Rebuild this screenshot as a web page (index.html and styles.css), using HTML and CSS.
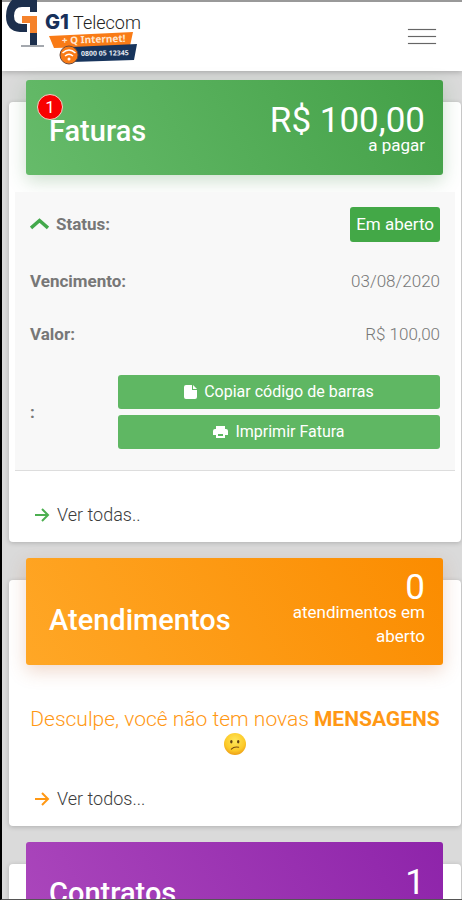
FILE: index.html
```html
<!DOCTYPE html>
<html lang="pt-BR">
<head>
<meta charset="utf-8">
<meta name="viewport" content="width=device-width, initial-scale=1">
<title>G1 Telecom</title>
<link rel="stylesheet" href="styles.css">
</head>
<body>
<div class="app">
  <header class="topbar">
    <a class="brand" href="#" aria-label="G1 Telecom">
      <svg class="logo" width="144" height="68" viewBox="0 0 144 68">
        <path d="M37 0V12H30V7H22Q14 7 14 16Q14 24 22 24H27V32H20Q6 31 6 16Q6 6 12 0Z" fill="#1c2f4d"/>
        <path d="M22 16H37V33H30V23H22Z" fill="#f5822b"/>
        <path d="M30 33H37V46H30Z" fill="#1c2f4d"/>
        <path d="M21 46H44" stroke="#a4a8ae" stroke-width="2"/>
        <text class="logo-g1" x="45" y="29">G1</text>
        <text class="logo-name" x="73" y="29">Telecom</text>
        <path d="M49 36L133 32L130 46L54 48Z" fill="#f97b16"/>
        <text class="logo-tag" x="62" y="44" transform="rotate(-2 62 44)">+ Q Internet!</text>
        <path d="M72 47L137 44L134 60L72 62Z" fill="#17345c"/>
        <text class="logo-phone" x="81" y="56" transform="rotate(-1 81 56)">0800 05 12345</text>
        <circle cx="69" cy="55" r="9" fill="#f97b16" stroke="#6b4a3c" stroke-width="1"/>
        <path d="M62.500 53Q69 47 75.500 53M65 56Q69 52.500 73 56" fill="none" stroke="#fff" stroke-width="1.500"/>
        <circle cx="69" cy="59" r="1.500" fill="#fff"/>
      </svg>
    </a>
    <button class="menu" type="button" aria-label="Menu"><span></span><span></span><span></span></button>
  </header>

  <main class="cards">
    <section class="card">
      <div class="card-head green">
        <h2><span class="count">1</span>Faturas</h2>
        <p class="summary"><strong>R$ 100,00</strong><span>a pagar</span></p>
      </div>
      <dl class="invoice">
        <div class="row tall">
          <dt><svg class="chevron" width="19" height="13" viewBox="0 0 19 13"><path d="M1 11L9.500 3.500L18 11" fill="none" stroke="#43a84b" stroke-width="3.500"/></svg>Status:</dt>
          <dd><span class="status">Em aberto</span></dd>
        </div>
        <div class="row"><dt>Vencimento:</dt><dd>03/08/2020</dd></div>
        <div class="row"><dt>Valor:</dt><dd>R$ 100,00</dd></div>
        <div class="row actions">
          <dt>:</dt>
          <dd>
            <button class="btn" type="button"><svg width="13" height="16" viewBox="0 0 13 16"><path d="M2 1H8V6H13V13Q13 15 11 15H2Q0 15 0 13V3Q0 1 2 1ZM9 1L13 5H9Z" fill="#fff"/></svg>Copiar código de barras</button>
            <button class="btn" type="button"><svg width="15" height="14" viewBox="0 0 15 14"><path d="M3 1H12V4H3ZM2 4H13Q15 4 15 6V10H12V13H3V10H0V6Q0 4 2 4Z" fill="#fff"/><path d="M5 9H10V11H5Z" fill="#5cb860"/></svg>Imprimir Fatura</button>
          </dd>
        </div>
      </dl>
      <a class="more" href="#"><svg width="15" height="14" viewBox="0 0 15 14"><path d="M0 7H13M7 1L13 7L7 13" fill="none" stroke="#4caf50" stroke-width="2"/></svg>Ver todas..</a>
    </section>

    <section class="card">
      <div class="card-head orange">
        <h2>Atendimentos</h2>
        <p class="summary"><strong>0</strong><span>atendimentos em aberto</span></p>
      </div>
      <p class="message">Desculpe, você não tem novas <b>MENSAGENS</b>
        <svg class="face" width="22" height="22" viewBox="0 0 24 24" role="img" aria-label="Rosto confuso">
          <defs><radialGradient id="skin" cx=".5" cy=".35" r=".65"><stop offset="0" stop-color="#ffe75a"/><stop offset=".7" stop-color="#fcc928"/><stop offset="1" stop-color="#ed9f17"/></radialGradient></defs>
          <circle cx="12" cy="12" r="12" fill="url(#skin)"/>
          <ellipse cx="8" cy="9.500" rx="1.300" ry="2" fill="#634214"/>
          <ellipse cx="15.500" cy="9.500" rx="1.300" ry="2" fill="#634214"/>
          <path d="M8 17.500Q11 14.500 16 15.500" fill="none" stroke="#7a4c12" stroke-width="1.200" stroke-linecap="round"/>
        </svg>
      </p>
      <a class="more" href="#"><svg width="15" height="14" viewBox="0 0 15 14"><path d="M0 7H13M7 1L13 7L7 13" fill="none" stroke="#ff9814" stroke-width="2"/></svg>Ver todos...</a>
    </section>

    <section class="card">
      <div class="card-head purple">
        <h2>Contratos</h2>
        <p class="summary single"><strong>1</strong></p>
      </div>
    </section>
  </main>
</div>
</body>
</html>
```

FILE: styles.css
```css
* { box-sizing: border-box; }

body {
  margin: 0;
  background: #dadada;
  color: #777;
  font: 400 17px/24px Roboto, sans-serif;
}

.app {
  height: 100vh;
  overflow: hidden;
  border-left: 2px solid #000;
  border-bottom: 1px solid #555;
}

h2, p, dl, dd { margin: 0; }

.topbar {
  display: flex;
  justify-content: space-between;
  align-items: center;
  height: 71px;
  padding-right: 26px;
  background: #fff;
  border-top: 2px solid #999;
  box-shadow: 0 1px 6px rgba(0, 0, 0, .25);
}

.brand { align-self: flex-start; margin-top: -2px; margin-left: -2px; }
.logo { display: block; }
.logo-g1 { font: 800 20px Inter, sans-serif; fill: #17305a; }
.logo-name { font: 300 18px Roboto, sans-serif; fill: #222; }
.logo-tag { font: 700 10px "Noto Sans", sans-serif; fill: #ffe6cf; }
.logo-phone { font: 700 7px "Noto Sans", sans-serif; fill: #e3e8ef; }

.menu {
  display: grid;
  gap: 6px;
  width: 28px;
  padding: 0;
  border: 0;
  background: none;
}
.menu span { height: 1px; background: #666; box-shadow: 0 0 1px #777; }

.cards {
  display: grid;
  gap: 38px;
  padding: 31px 1px 0 7px;
}

.card {
  background: #fff;
  border-radius: 4px;
  box-shadow: 0 1px 5px rgba(0, 0, 0, .2);
}

.card-head {
  display: flex;
  justify-content: space-between;
  align-items: center;
  min-height: 95px;
  margin: -22px 18px 0 17px;
  padding: 15px 18px 4px 23px;
  border-radius: 3px;
  color: #fff;
}
.green {
  background: linear-gradient(60deg, #66bb6a, #43a047);
  box-shadow: 0 6px 18px rgba(60, 130, 65, .25);
}
.orange {
  min-height: 107px;
  padding-top: 4px;
  background: linear-gradient(60deg, #ffa726, #fb8c00);
  box-shadow: 0 6px 18px rgba(190, 100, 50, .25);
}
.purple { background: linear-gradient(60deg, #ab47bc, #8e24aa); }

h2 {
  position: relative;
  padding-bottom: 4px;
  font-size: 29px;
  line-height: 36px;
  font-weight: 500;
}
.orange h2 { padding-top: 20px; }

.count {
  position: absolute;
  top: -19px;
  left: -12px;
  width: 26px;
  height: 26px;
  border: 1px solid #f3d3c8;
  border-radius: 50%;
  background: #f80000;
  font-size: 17px;
  line-height: 24px;
  font-weight: 400;
  text-align: center;
}

.summary { max-width: 160px; text-align: right; }
.summary strong {
  display: block;
  font-size: 35px;
  line-height: 24px;
  font-weight: 400;
}
.summary span { display: block; }
.single { padding-bottom: 24px; }

.invoice {
  margin: 17px 6px 0;
  padding: 3px 15px 21px;
  background: #f8f8f8;
  border-bottom: 1px solid #ddd;
}
.row {
  display: flex;
  justify-content: space-between;
  align-items: center;
  min-height: 50px;
}
.tall { min-height: 58px; }
.tall + .row { min-height: 56px; }
dt { font-weight: 700; }
.chevron { margin-right: 7px; }
dd { font-weight: 300; }
.status {
  display: block;
  padding: 5px 6px;
  border-radius: 3px;
  background: #43a847;
  color: #fff;
  font-weight: 400;
  line-height: 25px;
}
.actions { padding-top: 16px; }
.actions dd {
  display: grid;
  gap: 6px;
  width: 322px;
  max-width: 80%;
}
.btn {
  display: flex;
  justify-content: center;
  align-items: center;
  gap: 7px;
  height: 34px;
  border: 0;
  border-radius: 3px;
  background: #5fb763;
  color: #fff;
  font: 400 16px/24px Roboto, sans-serif;
}

.more {
  display: flex;
  align-items: center;
  gap: 7px;
  padding: 32px 26px 15px;
  color: #3c3c3c;
  font-size: 18px;
  font-weight: 300;
  text-decoration: none;
}

.message {
  padding: 42px 16px 0;
  color: #ff9814;
  font-size: 21px;
  font-weight: 300;
  line-height: 24px;
  text-align: center;
}
.message b { font-weight: 700; }
.face { vertical-align: middle; }
```
